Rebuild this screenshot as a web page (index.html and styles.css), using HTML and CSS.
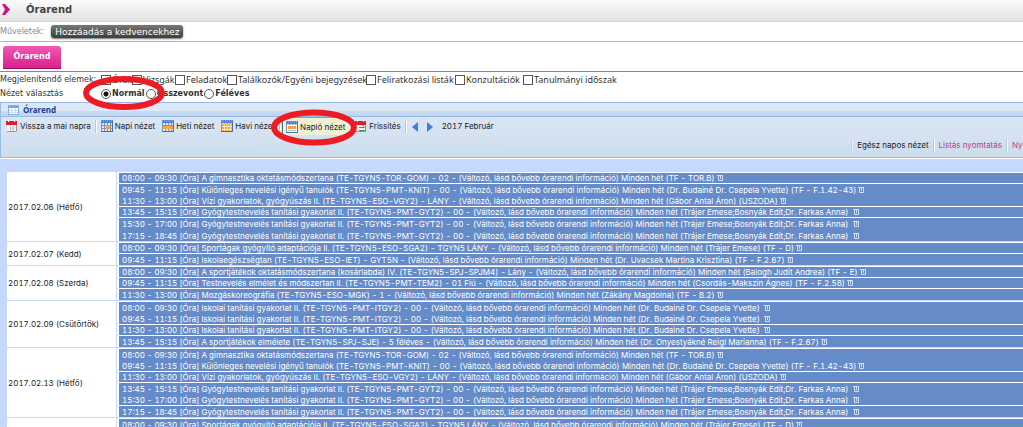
FILE: index.html
```html
<!DOCTYPE html>
<html lang="hu">
<head>
<meta charset="utf-8">
<title>Órarend</title>
<link rel="stylesheet" href="styles.css">
</head>
<body>
<svg class="defs" aria-hidden="true">
  <symbol id="cal" viewBox="0 0 12 12"><rect width="12" height="12" fill="#dbe6f5"/><rect width="12" height="3" fill="#4f7fd0"/><path d="M0 1h12" stroke="#9dbcf0" stroke-dasharray="1 1"/><path d="M0.500 3v9M3.500 3v9M6.500 3v9M9.500 3v9M0 5.500h12M0 8.500h12M0 11.500h12" stroke="#7b98c4"/><path d="M11.500 2v10M0 11.500h12" stroke="#476fa8"/></symbol>
  <symbol id="redcal" viewBox="0 0 12 12"><rect x="1" y="1" width="10" height="11" fill="#f4f4f4"/><rect y="1" width="11" height="4" fill="#d8202c"/><path d="M2.500 0v2M8.500 0v2" stroke="#fff"/><path d="M10.500 5v6.500H1" fill="none" stroke="#999"/></symbol>
  <symbol id="info" viewBox="0 0 6 6"><path d="M0 .5h6M1.500 1v4.500h4V1M3.500 1v3" fill="none" stroke="#d3dff2"/></symbol>
</svg>

<header class="title">
  <svg class="title__mark" viewBox="0 0 8 11"><path d="M0 0h3l5 5.500L3 11H0l3-5.500z" fill="#c5177c"/></svg>
  <h1>Órarend</h1>
</header>

<div class="actions"><span>Műveletek:</span><button type="button" class="favourite">Hozzáadás a kedvencekhez</button></div>

<nav class="tabs"><a href="#orarend" class="tab">Órarend</a></nav>

<form class="filters">
  <div class="filter-row">
    <span class="filter-label">Megjelenítendő elemek:</span>
    <label class="w1"><input type="checkbox">Órák</label>
    <label class="w2"><input type="checkbox">Vizsgák</label>
    <label class="w3"><input type="checkbox">Feladatok</label>
    <label class="w4"><input type="checkbox">Találkozók/Egyéni bejegyzések</label>
    <label class="w5"><input type="checkbox">Feliratkozási listák</label>
    <label class="w6"><input type="checkbox">Konzultációk</label>
    <label><input type="checkbox">Tanulmányi időszak</label>
  </div>
  <div class="filter-row filter-row--mode">
    <span class="filter-label">Nézet választás</span>
    <label><input type="radio" name="mode" checked>Normál</label>
    <label><input type="radio" name="mode">Összevont</label>
    <label><input type="radio" name="mode">Féléves</label>
  </div>
</form>

<section class="panel" id="orarend">
  <h2 class="panel__head"><svg class="table-icon" viewBox="0 0 11 10"><rect x=".5" y=".5" width="10" height="9" fill="#fff" stroke="#8cb0dd"/><path d="M1 2h9" stroke="#7aa6dc" stroke-width="2"/><path d="M1 5.500h9M1 7.500h9M3.500 3v6M7.500 3v6" stroke="#ccdcf0"/></svg>Órarend</h2>
  <div class="toolbar">
    <div class="tools">
      <button type="button" class="tool"><svg class="icon"><use href="#redcal"/><path d="M4.500 6.500v4M6 7h2v1.500H6.500V10H8" fill="none" stroke="#bbb"/></svg>Vissza a mai napra</button>
      <i class="sep"></i>
      <button type="button" class="tool tool--view"><svg class="icon"><use href="#cal"/><rect x="5" y="5" width="4" height="4" fill="#f3a63c"/></svg>Napi nézet</button>
      <button type="button" class="tool tool--view"><svg class="icon"><use href="#cal"/><rect x="1" y="6" width="10" height="3" fill="#f3a63c"/></svg>Heti nézet</button>
      <button type="button" class="tool"><svg class="icon"><use href="#cal"/><path d="M1 4h10v7H1z" fill="#f3a63c"/><path d="M3.500 4v7M6.500 4v7M9.500 4v7M1 6.500h10M1 9.500h10" stroke="#fbe3bb"/></svg>Havi nézet</button>
      <i class="sep"></i>
      <button type="button" class="tool tool--on"><svg class="icon"><use href="#cal"/><rect x="1" y="4" width="10" height="7" fill="#fff"/><rect x="2" y="5" width="8" height="3" fill="#f3a63c"/><path d="M2 9.500h8" stroke="#b6c6df"/></svg>Napló nézet</button>
      <button type="button" class="tool"><svg class="icon"><use href="#redcal"/><path d="M4 7.500h5M7 5l3 2.500M11 10.500H5M7 12L4 10" fill="none" stroke="#3f9a4a"/></svg>Frissítés</button>
      <i class="sep"></i>
      <button type="button" class="step" aria-label="Előző"><svg viewBox="0 0 6 10"><path d="M6 0v10L0 5z" fill="#3d7fdb"/></svg></button>
      <button type="button" class="step" aria-label="Következő"><svg viewBox="0 0 6 10"><path d="M0 0v10l6-5z" fill="#3d7fdb"/></svg></button>
      <span>2017 Február</span>
    </div>
    <div class="prints">
      <i class="sep sep--soft"></i><button type="button" class="tool">Egész napos nézet</button>
      <i class="sep"></i><a href="#lista">Listás nyomtatás</a>
      <i class="sep"></i><a href="#nyomtatas">Nyomtatás</a>
    </div>
  </div>
</section>

<main class="journal">
<table class="days"><tbody id="days"></tbody></table>
</main>

<svg class="ring ring--mode" viewBox="0 0 82 34"><ellipse cx="41" cy="17" rx="38" ry="14"/></svg>
<svg class="ring ring--journal" viewBox="0 0 86 37"><ellipse cx="43" cy="18.500" rx="40" ry="15"/></svg>
<script src="days.js"></script>
</body>
</html>
```
FILE: styles.css
```css
* { box-sizing: border-box; }
html { overflow: hidden; }
body { margin: 0; background: #fff; color: #333; font: 8px/12px Inter, "Noto Sans", sans-serif; font-variant-numeric: tabular-nums; position: relative; }
h1, h2 { margin: 0; }
a { text-decoration: none; }
button { margin: 0; padding: 0; border: 0; background: none; font: inherit; color: inherit; white-space: nowrap; }
.defs { display: none; }

.title { display: flex; align-items: center; height: 22px; padding: 0 0 2px 2px; gap: 16px; background: linear-gradient(#fbfbfb, #e2e2e2); border-bottom: 1px solid #d4d4d4; }
.title__mark { width: 8px; height: 11px; }
.title h1 { font: bold 10px/16px "DejaVu Sans", sans-serif; color: #444; }

.actions { display: flex; align-items: center; height: 20px; gap: 7px; border-bottom: 1px solid #b5b5b5; color: #888; font: 8px/12px "DejaVu Sans", sans-serif; }
.favourite { height: 13px; padding: 0 4px; border-radius: 3px; background: linear-gradient(#777, #3d3d3d); color: #fff; font-size: 9px; line-height: 12px; box-shadow: 0 1px 2px #777; }

.tabs { display: flex; padding: 4px 3px 2px; border-bottom: 1px solid #888; }
.tab { width: 58px; height: 23px; border-radius: 3px 3px 0 0; background: linear-gradient(#f05ab4, #d8208c); border-bottom: 1px solid #a00f68; color: #fff; font: bold 8px/22px "DejaVu Sans", sans-serif; text-align: center; }

.filters { padding: 1px 0; font: 9px/14px "Noto Sans", sans-serif; }
.filter-row { display: flex; align-items: center; height: 14px; white-space: nowrap; }
.filter-row label { display: flex; align-items: center; gap: 1px; }
.filter-row--mode label { font: bold 8px/14px "DejaVu Sans", sans-serif; padding-right: 1px; }
.filter-label { width: 101px; font-size: 8px; font-family: "DejaVu Sans", sans-serif; }
.filters input { appearance: none; width: 10px; height: 10px; margin: 0; border: 1px solid #555; background: #fff; flex: none; }
.filters input[type=radio] { border-radius: 50%; }
.filters input[type=radio]:checked { background: radial-gradient(circle, #111 0 2px, #fff 3px); }
.w1 { width: 31px; }
.w2 { width: 43px; }
.w3 { width: 52px; }
.w4 { width: 139px; }
.w5 { width: 89px; }
.w6 { width: 68px; }

.panel { border: 1px solid #99bbe8; border-right: 0; }
.panel__head { display: flex; align-items: center; gap: 4px; height: 14px; padding-left: 7px; border-bottom: 1px solid #99bbe8; background: linear-gradient(#dde8f7 0 60%, #cbdcf2 60%, #c0d4ee); color: #15428b; font: bold 8px/12px "Noto Sans", sans-serif; }
.table-icon { width: 11px; height: 10px; }
.toolbar { padding-bottom: 2px; background: linear-gradient(#dbe6f5, #cdddec); color: #222; overflow: hidden; }
.tools, .prints { display: flex; align-items: center; height: 18px; white-space: nowrap; }
.tools { padding-left: 5px; }
.tool { display: flex; align-items: center; gap: 2px; }
.tool--view { margin-right: 7px; }
.tool--on { height: 18px; padding: 0 5px 0 3px; margin-right: 5px; background: #eef1d3; border-left: 1px solid #666; border-top: 1px solid #999; }
.icon { width: 12px; height: 12px; flex: none; }
.sep { width: 2px; height: 13px; margin: 0 4px; border-left: 1px solid #b9c8dc; border-right: 1px solid #fff; flex: none; }
.sep + .tool--on { margin-left: -3px; }
.step { width: 6px; height: 10px; margin: 2px 9px 0 0; }
.sep + .step { margin-left: 1px; }
.step svg { display: block; width: 6px; height: 10px; }
.prints { display: grid; grid-template-columns: auto auto auto auto auto 11px; justify-content: end; height: 20px; }
.prints a { color: #c5378c; }
.sep--soft { opacity: .5; }

.journal { margin-top: 1px; padding: 12px 0 0 6px; background: #c5d8fe; }
.days { width: calc(100% + 1px); border-spacing: 1px; }
.days td { padding: 0; }
.days .date { width: 109px; padding-left: 1px; background: #fff; color: #222; vertical-align: middle; }
.days .entries { padding: 1px 0 0 2px; background: #fff; vertical-align: top; }
.entry { display: flex; align-items: center; gap: 2px; height: 11px; padding-left: 3px; border-bottom: 1px solid #fff; background: #658cc9; color: #fff; line-height: 10px; white-space: pre; overflow: hidden; }
.entry--joined { height: 12px; border-bottom: 0; }
.entry:last-child { border-bottom: 0; }
.entry svg { width: 6px; height: 6px; flex: none; }

.ring { position: absolute; fill: none; stroke: #ed1c24; stroke-width: 6; pointer-events: none; }
.ring--mode { left: 83px; top: 76px; width: 82px; height: 34px; }
.ring--journal { left: 271px; top: 109px; width: 86px; height: 37px; }
```
FILE: days.js
```js
const info = '(Változó, lásd bővebb órarendi információ) Minden hét';
const gymnastics = `A gimnasztika oktatásmódszertana (TE-TGYN5-TOR-GOM) - 02 - ${info} (TF - TOR.B)`;
const special = `Különleges nevelési igényű tanulók (TE-TGYN5-PMT-KNIT) - 00 - ${info} (Dr. Budainé Dr. Csepela Yvette) (TF - F.1.42-43)`;
const water = `Vízi gyakorlatok, gyógyúszás II. (TE-TGYN5-ESO-VGY2) - LÁNY - ${info} (Gábor Antal Áron) (USZODA)`;
const therapy = `Gyógytestnevelés tanítási gyakorlat II. (TE-TGYN5-PMT-GYT2) - 00 - ${info} (Trájer Emese;Bosnyák Edit;Dr. Farkas Anna) `;
const sports = `Sportágak gyógyító adaptációja II. (TE-TGYN5-ESO-SGA2) - TGYN5 LÁNY - ${info} (Trájer Emese) (TF - D)`;
const school = `Iskolai tanítási gyakorlat II. (TE-TGYN5-PMT-ITGY2) - 00 - ${info} (Dr. Budainé Dr. Csepela Yvette) `;
const slots = ['08:00 - 09:30', '09:45 - 11:15', '11:30 - 13:00', '13:45 - 15:15', '15:30 - 17:00', '17:15 - 18:45'];

// joined: indexes of entries that run into the next one without a rule
const days = [
  { date: '2017.02.06 (Hétfő)', joined: [1, 4], items: [gymnastics, special, water, therapy, therapy, therapy] },
  { date: '2017.02.07 (Kedd)', joined: [], items: [sports, `Iskolaegészségtan (TE-TGYN5-ESO-IET) - GYT5N - ${info} (Dr. Uvacsek Martina Krisztina) (TF - F.2.67)`] },
  { date: '2017.02.08 (Szerda)', joined: [], items: [
    `A sportjátékok oktatásmódszertana (kosárlabda) IV. (TE-TGYN5-SPJ-SPJM4) - Lány - ${info} (Balogh Judit Andrea) (TF - E)`,
    `Testnevelés elmélet és módszertan II. (TE-TGYN5-PMT-TEM2) - 01 Fiú - ${info} (Csordás-Makszin Ágnes) (TF - F.2.58)`,
    `Mozgáskoreográfia (TE-TGYN5-ESO-MGK) - 1 - ${info} (Zákány Magdolna) (TF - B.2)`] },
  { date: '2017.02.09 (Csütörtök)', joined: [0], items: [school, school, school,
    `A sportjátékok elmélete (TE-TGYN5-SPJ-SJE) - 5 féléves - ${info} (Dr. Onyestyákné Reigl Marianna) (TF - F.2.67)`] },
  { date: '2017.02.13 (Hétfő)', joined: [0, 3], items: [gymnastics, special, water, therapy, therapy, therapy] },
  { date: '', joined: [], items: [sports] }
];

document.getElementById('days').innerHTML = days.map(day => `
  <tr><td class="date">${day.date}</td><td class="entries">${day.items.map((item, i) =>
    `<div class="entry${day.joined.includes(i) ? ' entry--joined' : ''}"><span>${slots[i]} [Óra] ${item}</span><svg><use href="#info"/></svg></div>`).join('')}</td></tr>`).join('');
```
